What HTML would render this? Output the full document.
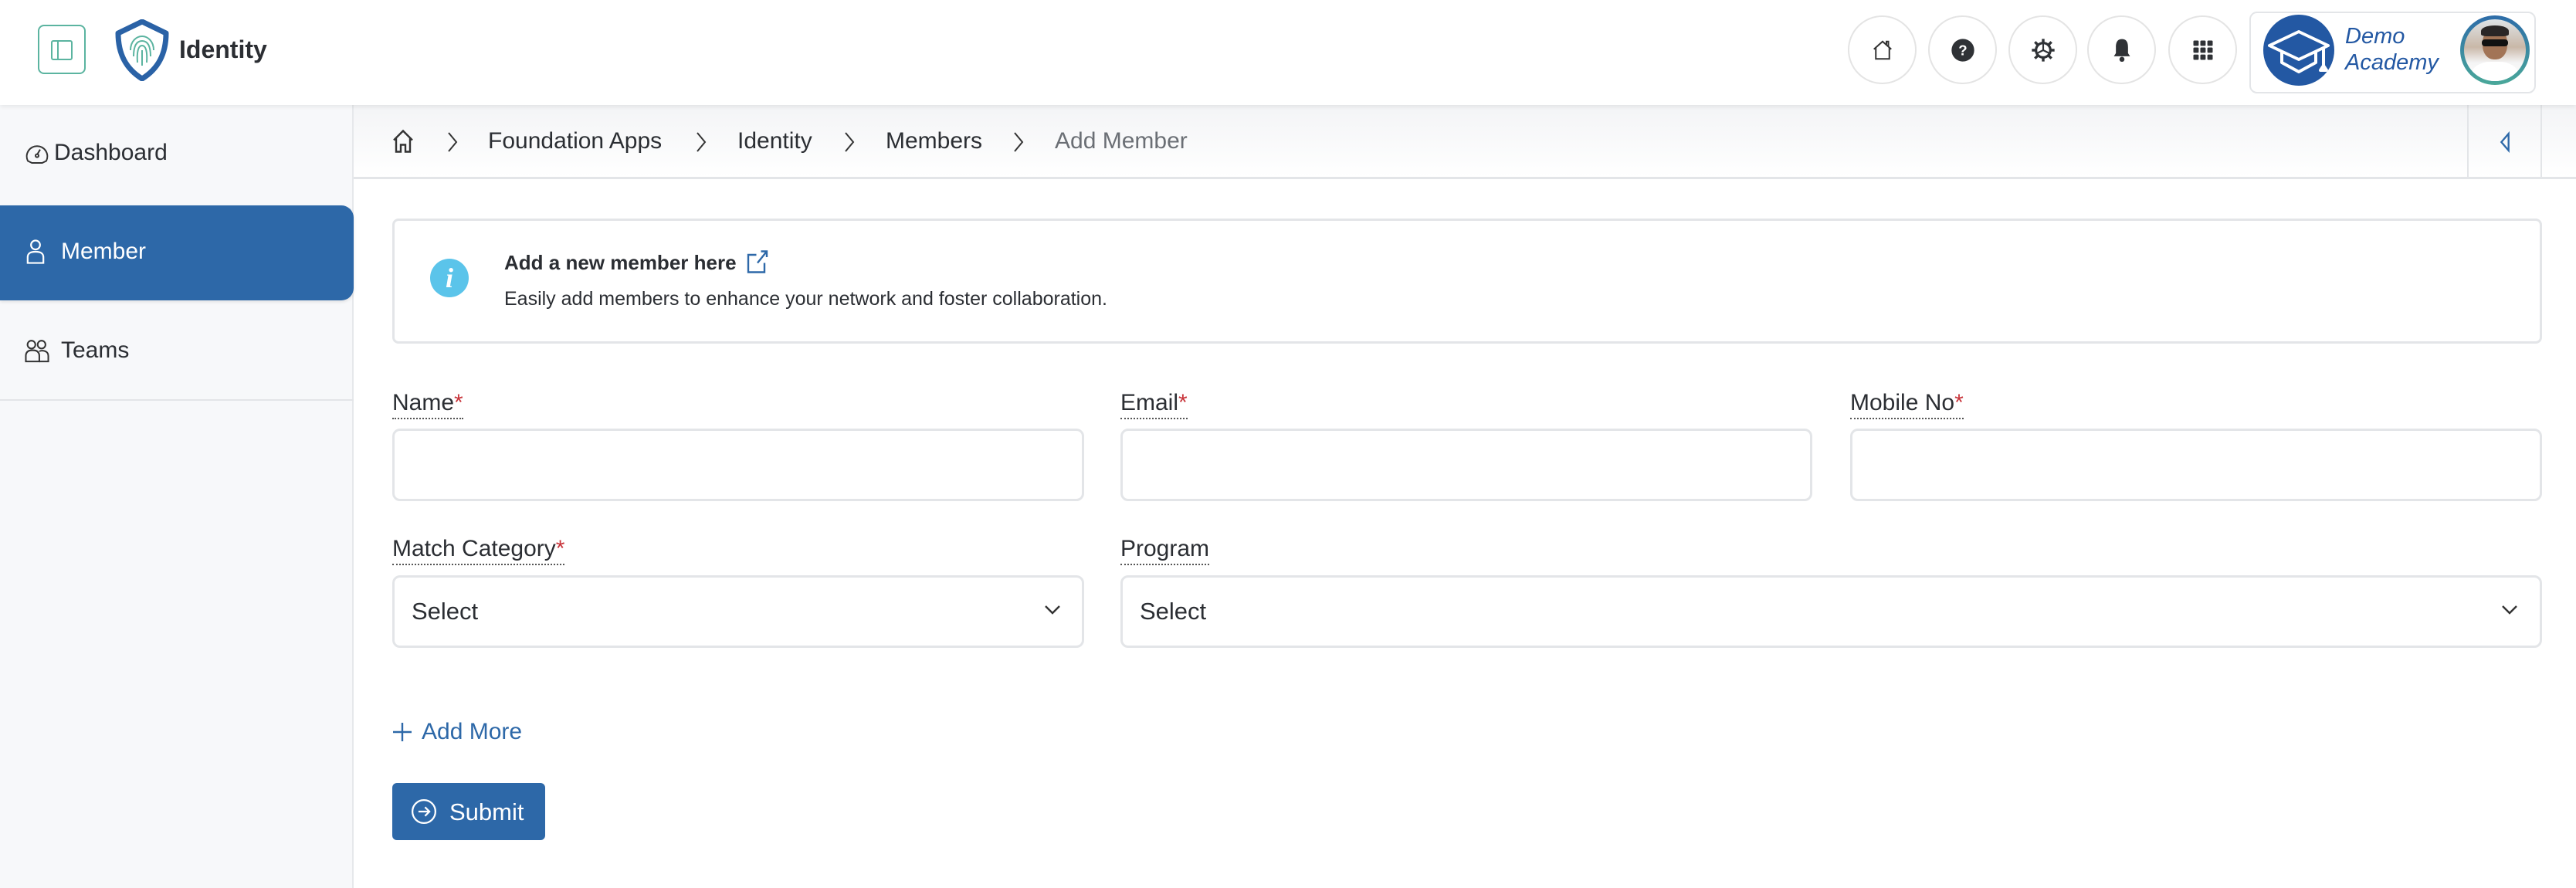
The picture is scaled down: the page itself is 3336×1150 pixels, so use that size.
<!DOCTYPE html>
<html><head><meta charset="utf-8"><style>
*{box-sizing:border-box;margin:0;padding:0}
body{width:3336px;height:1150px;overflow:hidden;background:#fff;font-family:"Liberation Sans",sans-serif;color:#2b2e33;position:relative}
.abs{position:absolute}
.header{left:0;top:0;width:3336px;height:136px;background:#fff;box-shadow:0 2px 6px rgba(0,0,0,.08);z-index:2}
.sidebar{left:0;top:136px;width:458px;height:1014px;background:#f7f8fa;border-right:2px solid #e6e8eb}
.circ{width:89px;height:89px;border-radius:50%;border:2px solid #e4e4e4;top:20px;display:flex;align-items:center;justify-content:center;background:#fff}
.lbl{font-size:30px;color:#2b2e33;border-bottom:2px dotted #555;padding-bottom:2px}
.lbl b{color:#c8343a;font-weight:normal}
.inp{border:3px solid #e3e5e8;border-radius:10px;background:#fff}
.sel{font-size:31px;color:#2b2e33;display:flex;align-items:center;padding-left:22px}
.bc{font-size:30px;color:#2b2e33;top:166px}
.chev{top:170px}
</style></head><body>
<div class="abs header">
  <div class="abs" style="left:49px;top:32px;width:62px;height:64px;border:2px solid #5bb4a0;border-radius:8px"></div>
  <div class="abs" style="left:66px;top:52px;width:28px;height:26px;border:2px solid #5bb4a0;border-radius:3px"><div style="width:8px;height:22px;border-right:2px solid #5bb4a0"></div></div>
  <svg class="abs" style="left:147px;top:25px" width="74" height="80" viewBox="0 0 74 80"><path d="M37 3 L68 18 C68 45 58 64 37 77 C16 64 6 45 6 18 Z" fill="#fff" stroke="#2a62a6" stroke-width="7" stroke-linejoin="round"/><g fill="none" stroke="#5bb4a0" stroke-width="2"><path d="M22 40 C22 28 30 22 37 22 C44 22 52 28 52 40"/><path d="M26 48 C26 34 30 28 37 28 C44 28 48 34 48 48"/><path d="M31 56 C30 42 32 34 37 34 C42 34 44 42 43 56"/><path d="M37 40 L37 60"/></g></svg>
  <div class="abs" style="left:232px;top:46px;font-size:32px;font-weight:bold;color:#2b2e33">Identity</div>
  <div class="abs circ" style="left:2393px"><svg width="30" height="30" viewBox="0 0 24 24" fill="none" stroke="#333" stroke-width="1.6"><path d="M3 11 L12 3 L21 11 M5 9 V21 H19 V9 M16 6 V3 H18 V8"/></svg></div>
  <div class="abs circ" style="left:2497px"><svg width="32" height="32" viewBox="0 0 24 24"><circle cx="12" cy="12" r="11" fill="#2f3236"/><text x="12" y="17" font-size="14" font-weight="bold" fill="#fff" text-anchor="middle" font-family="Liberation Sans">?</text></svg></div>
  <div class="abs circ" style="left:2601px"><svg width="32" height="32" viewBox="0 0 24 24" fill="none" stroke="#2f3236" stroke-width="2.4"><circle cx="12" cy="12" r="7"/><path d="M12 1v4M12 19v4M1 12h4M19 12h4M4 4l3 3M17 17l3 3M4 20l3-3M17 7l3-3" stroke-width="2.6"/><path d="M12 12 L12 5 M12 12 L18 15 M12 12 L6 15" stroke-width="1.6"/></svg></div>
  <div class="abs circ" style="left:2703px"><svg width="32" height="34" viewBox="0 0 24 26"><path d="M12 2 C7 2 6 6 6 10 V16 L4 19 H20 L18 16 V10 C18 6 17 2 12 2Z" fill="#2f3236"/><circle cx="12" cy="22" r="2.5" fill="#2f3236"/></svg></div>
  <div class="abs circ" style="left:2808px"><svg width="30" height="30" viewBox="0 0 24 24" fill="#2f3236"><rect x="2" y="2" width="5.5" height="5.5" rx="1"/><rect x="9.2" y="2" width="5.5" height="5.5" rx="1"/><rect x="16.5" y="2" width="5.5" height="5.5" rx="1"/><rect x="2" y="9.2" width="5.5" height="5.5" rx="1"/><rect x="9.2" y="9.2" width="5.5" height="5.5" rx="1"/><rect x="16.5" y="9.2" width="5.5" height="5.5" rx="1"/><rect x="2" y="16.5" width="5.5" height="5.5" rx="1"/><rect x="9.2" y="16.5" width="5.5" height="5.5" rx="1"/><rect x="16.5" y="16.5" width="5.5" height="5.5" rx="1"/></svg></div>
  <div class="abs" style="left:2913px;top:15px;width:371px;height:106px;border:2px solid #e3e5e8;border-radius:10px;background:#fff"></div>
  <div class="abs" style="left:2931px;top:19px;width:92px;height:92px;border-radius:50%;background:#2358a3;overflow:hidden"><svg width="92" height="92" viewBox="0 0 92 92" fill="none" stroke="#fff" stroke-width="4" stroke-linejoin="round"><path d="M8 40 L46 22 L84 40 L46 58 Z"/><path d="M24 48 V62 L46 74 L68 62 V48"/><path d="M78 44 V68 M74 72 L78 66 L82 72 Z"/></svg></div>
  <div class="abs" style="left:3037px;top:30px;font-size:29px;font-style:italic;color:#2358a3;line-height:34px">Demo<br>Academy</div>
  <div class="abs" style="left:3186px;top:20px;width:90px;height:90px;border-radius:50%;background:linear-gradient(180deg,#2d6ca8,#4aa89a);padding:5px"><div style="width:80px;height:80px;border-radius:50%;background:linear-gradient(180deg,#dfe3e6 0%,#c9b8a8 45%,#f4f4f4 70%,#fff 100%);position:relative;overflow:hidden"><div style="position:absolute;left:24px;top:12px;width:32px;height:40px;border-radius:45%;background:#a27456"></div><div style="position:absolute;left:22px;top:8px;width:36px;height:14px;border-radius:50% 50% 20% 20%;background:#2a2626"></div><div style="position:absolute;left:23px;top:26px;width:34px;height:9px;background:#111;border-radius:4px"></div><div style="position:absolute;left:10px;top:55px;width:60px;height:40px;border-radius:40% 40% 0 0;background:#fff"></div></div></div>
</div>
<div class="abs sidebar">
  <div class="abs" style="left:0;top:381px;width:458px;height:2px;background:#e3e5e8"></div>
  <div class="abs" style="left:0;top:130px;width:458px;height:123px;background:#2d68a8;border-radius:0 16px 16px 0;box-shadow:0 2px 4px rgba(0,0,0,.1)"></div>
  <svg class="abs" style="left:32px;top:48px" width="32" height="30" viewBox="0 0 24 22" fill="none" stroke="#333" stroke-width="1.5"><path d="M3 18 A10 10 0 1 1 21 18 L17 20 H7 Z"/><path d="M12 12 L15 7"/><circle cx="12" cy="13" r="1.5"/></svg>
  <div class="abs" style="left:70px;top:45px;font-size:30px;color:#2b2e33">Dashboard</div>
  <svg class="abs" style="left:34px;top:174px" width="24" height="32" viewBox="0 0 16 22" fill="none" stroke="#fff" stroke-width="1.5"><circle cx="8" cy="5" r="4"/><path d="M1 21 V16 C1 12 4 11 8 11 C12 11 15 12 15 16 V21 Z"/></svg>
  <div class="abs" style="left:79px;top:173px;font-size:30px;color:#fff">Member</div>
  <svg class="abs" style="left:32px;top:303px" width="32" height="32" viewBox="0 0 22 22" fill="none" stroke="#333" stroke-width="1.4"><circle cx="6" cy="5" r="3.5"/><circle cx="15" cy="5" r="3.5"/><path d="M1 20 V15 C1 11 4 10 7 10 C10 10 13 11 13 15 V20 Z"/><path d="M13 11 C15 10 21 10 21 15 V20 H13"/></svg>
  <div class="abs" style="left:79px;top:301px;font-size:30px;color:#2b2e33">Teams</div>
</div>
<div class="abs" style="left:458px;top:136px;width:2878px;height:96px;background:linear-gradient(180deg,#f3f4f6,#fff);border-bottom:3px solid #e3e5e8"></div>
<div class="abs" style="left:3195px;top:136px;width:2px;height:96px;background:#e3e5e8"></div>
<div class="abs" style="left:3290px;top:136px;width:2px;height:96px;background:#e3e5e8"></div>
<svg class="abs" style="left:3236px;top:170px" width="16" height="28" viewBox="0 0 10 18" fill="none" stroke="#2d68a8" stroke-width="1.5"><path d="M8 2 L2 9 L8 16 Z"/></svg>
<svg class="abs" style="left:507px;top:166px" width="30" height="34" viewBox="0 0 20 22" fill="none" stroke="#333" stroke-width="1.6"><path d="M2 10 L10 2 L18 10 M4 8 V20 H8 V14 H12 V20 H16 V8"/></svg>
<svg class="abs chev" style="left:578px" width="16" height="28" viewBox="0 0 16 28" fill="none" stroke="#333" stroke-width="2"><path d="M3 2 L13 14 L3 26"/></svg>
<div class="abs bc" style="left:632px">Foundation Apps</div>
<svg class="abs chev" style="left:900px" width="16" height="28" viewBox="0 0 16 28" fill="none" stroke="#333" stroke-width="2"><path d="M3 2 L13 14 L3 26"/></svg>
<div class="abs bc" style="left:955px">Identity</div>
<svg class="abs chev" style="left:1092px" width="16" height="28" viewBox="0 0 16 28" fill="none" stroke="#333" stroke-width="2"><path d="M3 2 L13 14 L3 26"/></svg>
<div class="abs bc" style="left:1147px">Members</div>
<svg class="abs chev" style="left:1311px" width="16" height="28" viewBox="0 0 16 28" fill="none" stroke="#333" stroke-width="2"><path d="M3 2 L13 14 L3 26"/></svg>
<div class="abs bc" style="left:1366px;color:#6b6f75">Add Member</div>

<div class="abs" style="left:508px;top:283px;width:2784px;height:162px;border:3px solid #e3e5e8;border-radius:8px;background:#fff"></div>
<div class="abs" style="left:557px;top:335px;width:50px;height:50px;border-radius:50%;background:#5bc4ea;color:#fff;font-family:'Liberation Serif',serif;font-style:italic;font-weight:bold;font-size:36px;text-align:center;line-height:50px">i</div>
<div class="abs" style="left:653px;top:325px;font-size:26px;font-weight:bold;color:#2b2e33">Add a new member here</div>
<svg class="abs" style="left:966px;top:322px" width="30" height="34" viewBox="0 0 20 22" fill="none" stroke="#2d68a8" stroke-width="1.6"><path d="M9 5 H2 V20 H16 V12"/><path d="M10 12 L18 2 M13 2 H18 V7"/></svg>
<div class="abs" style="left:653px;top:373px;font-size:25px;color:#2b2e33">Easily add members to enhance your network and foster collaboration.</div>

<div class="abs lbl" style="left:508px;top:505px">Name<b>*</b></div>
<div class="abs lbl" style="left:1451px;top:505px">Email<b>*</b></div>
<div class="abs lbl" style="left:2396px;top:505px">Mobile No<b>*</b></div>
<div class="abs inp" style="left:508px;top:555px;width:896px;height:94px"></div>
<div class="abs inp" style="left:1451px;top:555px;width:896px;height:94px"></div>
<div class="abs inp" style="left:2396px;top:555px;width:896px;height:94px"></div>

<div class="abs lbl" style="left:508px;top:694px">Match Category<b>*</b></div>
<div class="abs lbl" style="left:1451px;top:694px">Program</div>
<div class="abs inp sel" style="left:508px;top:745px;width:896px;height:94px">Select</div>
<div class="abs inp sel" style="left:1451px;top:745px;width:1841px;height:94px">Select</div>
<svg class="abs" style="left:1352px;top:782px" width="22" height="16" viewBox="0 0 22 16" fill="none" stroke="#333" stroke-width="2.4"><path d="M2 3 L11 12 L20 3"/></svg>
<svg class="abs" style="left:3239px;top:782px" width="22" height="16" viewBox="0 0 22 16" fill="none" stroke="#333" stroke-width="2.4"><path d="M2 3 L11 12 L20 3"/></svg>

<svg class="abs" style="left:508px;top:935px" width="26" height="26" viewBox="0 0 26 26" stroke="#2d68a8" stroke-width="2.4"><path d="M13 1 V25 M1 13 H25"/></svg>
<div class="abs" style="left:546px;top:931px;font-size:30px;color:#2d68a8">Add More</div>

<div class="abs" style="left:508px;top:1014px;width:198px;height:74px;background:#2d68a8;border-radius:6px"></div>
<svg class="abs" style="left:532px;top:1034px" width="34" height="34" viewBox="0 0 24 24" fill="none" stroke="#fff" stroke-width="1.6"><circle cx="12" cy="12" r="10.5"/><path d="M7 12 H17 M13 8 L17 12 L13 16"/></svg>
<div class="abs" style="left:582px;top:1034px;font-size:31px;color:#fff">Submit</div>
</body></html>
